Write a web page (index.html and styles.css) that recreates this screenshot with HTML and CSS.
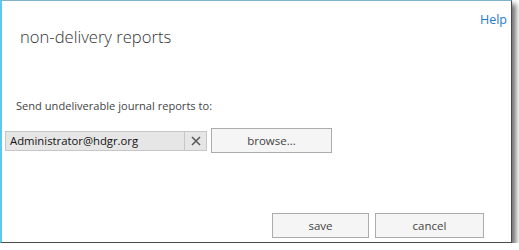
FILE: index.html
```html
<!DOCTYPE html>
<html lang="en">
<head>
  <meta charset="UTF-8" />
  <title>non-delivery reports</title>
  <link rel="stylesheet" href="styles.css">
</head>
<body>

  <!-- Dialog frame -->
  <div class="dialog">
    <header class="dialog-head">
      <h1>non-delivery reports</h1>
      <a class="help" href="#">Help</a>
    </header>

    <main class="dialog-body">
      <label class="field-label">Send undeliverable journal reports to:</label>
      <div class="picker">
        <div class="recipient">
          <span class="recipient-name">Administrator@hdgr.org</span>
          <button class="remove" title="remove">
            <svg width="10" height="10" viewBox="0 0 10 10">
              <path d="M1 1 L9 9 M9 1 L1 9" stroke="#5a5a5a" stroke-width="1.6" fill="none"/>
            </svg>
          </button>
        </div>
        <button class="btn browse">browse...</button>
      </div>
    </main>

    <footer class="dialog-foot">
      <button class="btn save">save</button>
      <button class="btn cancel">cancel</button>
    </footer>
  </div>

</body>
</html>
```

FILE: styles.css
```css
body {
  margin: 0;
  background: #fff;
  font-family: "Open Sans", "Noto Sans", "Liberation Sans", sans-serif;
}

.dialog {
  box-sizing: border-box;
  width: 512px;
  height: 243px;
  background: #fff;
  border-left: 2px solid #5bc8ee;
  border-top: 1px solid #80b2cc;
  border-right: 1px solid #4a4a4a;
  border-bottom: 1px solid #4a4a4a;
  box-shadow: 4px 4px 5px rgba(0, 0, 0, 0.55);
  display: flex;
  flex-direction: column;
}

.dialog-head {
  display: flex;
  justify-content: space-between;
  align-items: flex-start;
  padding: 0 4px 0 18px;
}

.dialog-head h1 {
  margin: 24px 0 0 0;
  font-size: 16.6px;
  font-weight: 300;
  line-height: 24px;
  color: #333;
}

.help {
  margin-top: 10px;
  font-size: 12.5px;
  line-height: 18px;
  color: #1f7bc9;
  text-decoration: none;
}

.dialog-body {
  padding: 0 0 0 3px;
  display: flex;
  flex-direction: column;
}

.field-label {
  margin: 49px 0 0 11px;
  font-size: 11.1px;
  line-height: 16px;
  color: #444;
}

.picker {
  margin-top: 14px;
  display: flex;
  align-items: center;
  gap: 4px;
}

.recipient {
  display: flex;
  align-items: stretch;
  width: 202px;
  height: 20px;
  box-sizing: border-box;
  background: #e6e6e6;
  border: 1px solid #c6c6c6;
}

.recipient-name {
  flex: 1;
  padding-left: 4px;
  font-size: 11.3px;
  line-height: 18px;
  color: #111;
}

.remove {
  width: 22px;
  padding: 0;
  border: none;
  border-left: 1px solid #c6c6c6;
  background: #e6e6e6;
  display: flex;
  align-items: center;
  justify-content: center;
}

.btn {
  box-sizing: border-box;
  height: 25px;
  padding: 0;
  background: #f5f5f5;
  border: 1px solid #acacac;
  font-family: inherit;
  font-size: 11.5px;
  color: #444;
}

.browse {
  width: 121px;
}

.dialog-foot {
  margin-top: auto;
  display: flex;
  justify-content: flex-end;
  gap: 6px;
  padding: 0 27px 4px 0;
}

.save {
  width: 97px;
}

.cancel {
  width: 109px;
}
```
